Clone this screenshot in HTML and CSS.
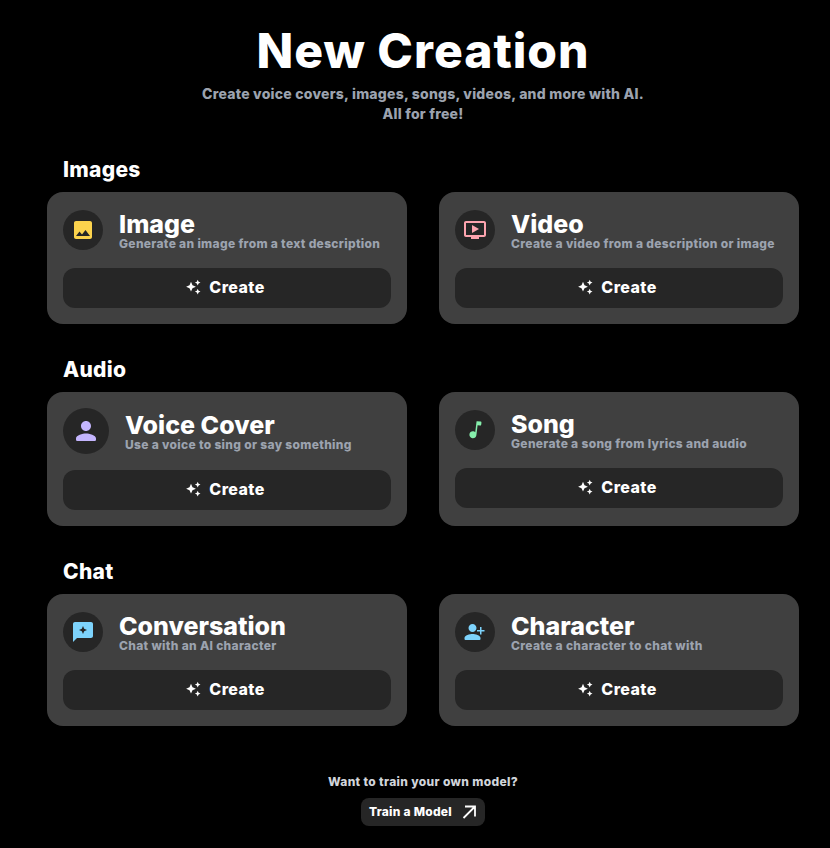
FILE: index.html
```html
<!DOCTYPE html>
<html lang="en">
<head>
    <meta charset="UTF-8">
    <meta name="viewport" content="width=device-width, initial-scale=1">
    <title>New Creation</title>
    <link rel="stylesheet" href="styles.css">
</head>
<body>
    <svg class="sprites" xmlns="http://www.w3.org/2000/svg" width="0" height="0">
        <symbol id="sparkles" viewBox="0 0 16 16">
            <path d="M6 2.800l1.500 3.400 3.400 1.500-3.400 1.500L6 12.600 4.500 9.200 1.100 7.700l3.400-1.500zM12.700 .8l.9 1.900 1.900.9-1.900.9-.9 1.900-.9-1.900-1.900-.9 1.900-.9zM12.700 9.800l.9 1.900 1.900.9-1.900.9-.9 1.900-.9-1.900-1.900-.9 1.900-.9z"/>
        </symbol>
    </svg>

    <main class="page">
        <header class="hero">
            <h1 class="hero__title">New Creation</h1>
            <p class="hero__text">Create voice covers, images, songs, videos, and more with AI.<br>All for free!</p>
        </header>

        <section class="group">
            <h2 class="group__title">Images</h2>
            <div class="group__grid">
                <div class="card">
                    <div class="card__head">
                        <div class="card__icon card__icon--amber">
                            <svg viewBox="0 0 24 24" width="24" height="24"><path d="M21 19V5c0-1.100-.9-2-2-2H5c-1.100 0-2 .9-2 2v14c0 1.100.9 2 2 2h14c1.100 0 2-.9 2-2zM8.500 13.500l2.500 3.010L14.500 12l4.500 6H5l3.500-4.500z"/></svg>
                        </div>
                        <div class="card__copy">
                            <h3 class="card__title">Image</h3>
                            <p class="card__text">Generate an image from a text description</p>
                        </div>
                    </div>
                    <button class="card__btn"><svg class="card__spark"><use href="#sparkles"/></svg>Create</button>
                </div>
                <div class="card">
                    <div class="card__head">
                        <div class="card__icon card__icon--rose">
                            <svg viewBox="0 0 24 24" width="24" height="24"><path d="M21 3H3c-1.110 0-2 .89-2 2v12c0 1.100.89 2 2 2h5v2h8v-2h5c1.100 0 1.990-.9 1.990-2L23 5c0-1.110-.9-2-2-2zm0 14H3V5h18v12zm-5-6l-7 4V7z"/></svg>
                        </div>
                        <div class="card__copy">
                            <h3 class="card__title">Video</h3>
                            <p class="card__text">Create a video from a description or image</p>
                        </div>
                    </div>
                    <button class="card__btn"><svg class="card__spark"><use href="#sparkles"/></svg>Create</button>
                </div>
            </div>
        </section>

        <section class="group">
            <h2 class="group__title">Audio</h2>
            <div class="group__grid">
                <div class="card">
                    <div class="card__head">
                        <div class="card__icon card__icon--big card__icon--violet">
                            <svg viewBox="0 0 24 24" width="30" height="30"><path d="M12 12c2.210 0 4-1.790 4-4s-1.790-4-4-4-4 1.790-4 4 1.790 4 4 4zM4 18c0-2.660 5.330-4 8-4s8 1.340 8 4v1a1 1 0 0 1-1 1H5a1 1 0 0 1-1-1z"/></svg>
                        </div>
                        <div class="card__copy">
                            <h3 class="card__title">Voice Cover</h3>
                            <p class="card__text">Use a voice to sing or say something</p>
                        </div>
                    </div>
                    <button class="card__btn"><svg class="card__spark"><use href="#sparkles"/></svg>Create</button>
                </div>
                <div class="card">
                    <div class="card__head">
                        <div class="card__icon card__icon--green">
                            <svg viewBox="0 0 24 24" width="24" height="24"><path transform="rotate(7 12 12)" d="M12.500 3.500v10.600c-.6-.4-1.300-.6-2-.6-2 0-3.500 1.500-3.500 3.500s1.500 3.500 3.500 3.500 3.500-1.500 3.500-3.500V7h2.500c.6 0 1-.4 1-1V4c0-.6-.4-1-1-1h-3.500c-.3 0-.5.2-.5.500z"/></svg>
                        </div>
                        <div class="card__copy">
                            <h3 class="card__title">Song</h3>
                            <p class="card__text">Generate a song from lyrics and audio</p>
                        </div>
                    </div>
                    <button class="card__btn"><svg class="card__spark"><use href="#sparkles"/></svg>Create</button>
                </div>
            </div>
        </section>

        <section class="group">
            <h2 class="group__title">Chat</h2>
            <div class="group__grid">
                <div class="card">
                    <div class="card__head">
                        <div class="card__icon card__icon--sky">
                            <svg viewBox="0 0 24 24" width="24" height="24"><path fill-rule="evenodd" d="M20 2H4c-1.100 0-2 .9-2 2v18l4-4h14c1.100 0 2-.9 2-2V4c0-1.100-.9-2-2-2zM12 6l1.200 2.800L16 10l-2.800 1.200L12 14l-1.200-2.800L8 10l2.800-1.200z"/></svg>
                        </div>
                        <div class="card__copy">
                            <h3 class="card__title">Conversation</h3>
                            <p class="card__text">Chat with an AI character</p>
                        </div>
                    </div>
                    <button class="card__btn"><svg class="card__spark"><use href="#sparkles"/></svg>Create</button>
                </div>
                <div class="card">
                    <div class="card__head">
                        <div class="card__icon card__icon--sky">
                            <svg viewBox="0 0 24 24" width="24" height="24"><path d="M9.500 12c2.210 0 4-1.790 4-4s-1.790-4-4-4-4 1.790-4 4 1.790 4 4 4zM18.500 10V7h-1.500v3h-3v1.500h3v3h1.500v-3h3V10zM9.500 14c-2.670 0-8 1.340-8 4v1a1 1 0 0 0 1 1h14a1 1 0 0 0 1-1v-1c0-2.660-5.330-4-8-4z"/></svg>
                        </div>
                        <div class="card__copy">
                            <h3 class="card__title">Character</h3>
                            <p class="card__text">Create a character to chat with</p>
                        </div>
                    </div>
                    <button class="card__btn"><svg class="card__spark"><use href="#sparkles"/></svg>Create</button>
                </div>
            </div>
        </section>

        <footer class="train">
            <p class="train__text">Want to train your own model?</p>
            <button class="train__btn">Train a Model
                <svg viewBox="0 0 14 14" width="14" height="14"><path d="M1.500 13L13 1.500M3 1.500h10V11.500" fill="none" stroke="#ffffff" stroke-width="1.800"/></svg>
            </button>
        </footer>
    </main>
</body>
</html>
```

FILE: styles.css
```css
* {
    box-sizing: border-box;
}

body {
    background-color: #000000;
    color: #ffffff;
    font-family: Inter, "Liberation Sans", sans-serif;
    margin: 0;
    padding: 0;
}

.sprites {
    position: absolute;
}

.page {
    padding: 0 31px 22px 47px;
}

.hero {
    text-align: center;
    padding-top: 21px;
    margin-bottom: 32px;
}

.hero__title {
    font-size: 48px;
    line-height: 60px;
    font-weight: 800;
    letter-spacing: 1px;
    margin: 0 0 3px;
}

.hero__text {
    font-size: 14px;
    line-height: 20px;
    font-weight: 800;
    letter-spacing: 0.23px;
    color: #9ca3af;
    margin: 0;
}

.group {
    margin-bottom: 32px;
}

.group__title {
    font-size: 21px;
    line-height: 28px;
    font-weight: 800;
    letter-spacing: 0.3px;
    margin: 0 0 8px 16px;
}

.group__grid {
    display: grid;
    grid-template-columns: 360px 360px;
    column-gap: 32px;
}

.card {
    background-color: #404040;
    border-radius: 16px;
    padding: 16px;
}

.card__head {
    display: flex;
    align-items: center;
    gap: 16px;
    min-height: 44px;
    margin-bottom: 16px;
}

.card__icon {
    width: 40px;
    height: 40px;
    border-radius: 50%;
    background-color: #262626;
    display: flex;
    align-items: center;
    justify-content: center;
    flex-shrink: 0;
}

.card__icon--big {
    width: 46px;
    height: 46px;
}

.card__icon--amber svg {
    fill: #fcd34d;
}

.card__icon--rose svg {
    fill: #fda4af;
}

.card__icon--violet svg {
    fill: #c4b5fd;
}

.card__icon--green svg {
    fill: #86efac;
}

.card__icon--sky svg {
    fill: #7dd3fc;
}

.card__copy {
    padding-top: 1px;
}

.card__title {
    font-size: 25px;
    line-height: 26px;
    font-weight: 800;
    margin: 0;
}

.card__text {
    font-size: 12px;
    line-height: 14px;
    font-weight: 800;
    letter-spacing: 0.32px;
    color: #9ca3af;
    margin: 0;
}

.card__btn {
    width: 100%;
    height: 40px;
    border: none;
    border-radius: 12px;
    padding: 0 4px 2px 0;
    background-color: #262626;
    color: #ffffff;
    font-family: inherit;
    font-size: 16px;
    font-weight: 800;
    letter-spacing: 0.4px;
    display: flex;
    align-items: center;
    justify-content: center;
    gap: 8px;
}

.card__spark {
    width: 16px;
    height: 16px;
    fill: #ffffff;
}

.train {
    text-align: center;
    margin-top: 48px;
}

.train__text {
    font-size: 12px;
    line-height: 16px;
    font-weight: 800;
    letter-spacing: 0.35px;
    color: #d1d5db;
    margin: 0 0 8px;
}

.train__btn {
    display: inline-flex;
    align-items: center;
    gap: 10px;
    height: 28px;
    padding: 0 9px 1px 8px;
    border: none;
    border-radius: 8px;
    background-color: #262626;
    color: #ffffff;
    font-family: inherit;
    font-size: 12px;
    font-weight: 800;
    letter-spacing: 0.25px;
}
```
